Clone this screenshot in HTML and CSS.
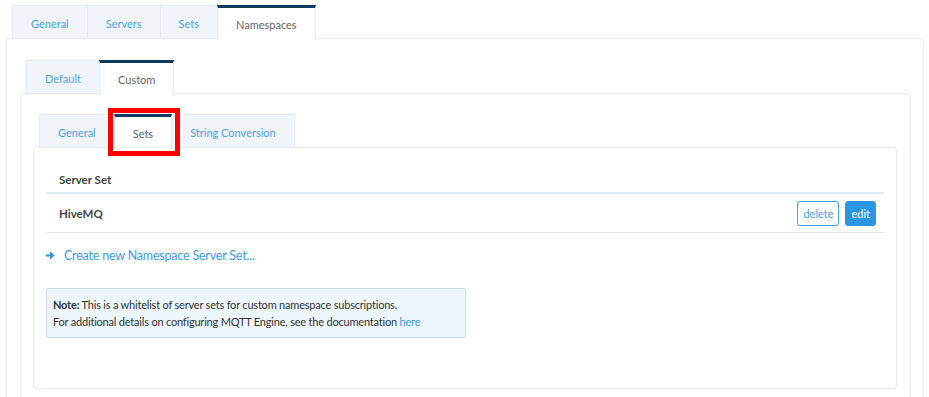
FILE: index.html
```html
<!DOCTYPE html>
<html lang="en">
<head>
    <meta charset="UTF-8">
    <meta name="viewport" content="width=device-width, initial-scale=1.0">
    <title>MQTT Engine - Namespaces</title>
    <link rel="stylesheet" href="styles.css">
</head>
<body>
    <div class="page">
        <div class="tabs top-tabs">
            <a class="tab">General</a>
            <a class="tab">Servers</a>
            <a class="tab">Sets</a>
            <a class="tab active">Namespaces</a>
        </div>
        <div class="panel outer">
            <div class="tabs">
                <a class="tab">Default</a>
                <a class="tab active">Custom</a>
            </div>
            <div class="panel middle">
                <div class="tabs">
                    <a class="tab">General</a>
                    <a class="tab active marked">Sets<span class="highlight"></span></a>
                    <a class="tab">String Conversion</a>
                </div>
                <div class="panel inner">
                    <table class="sets">
                        <thead>
                            <tr><th>Server Set</th><th></th></tr>
                        </thead>
                        <tbody>
                            <tr>
                                <td class="name">HiveMQ</td>
                                <td class="actions">
                                    <button class="btn btn-outline">delete</button>
                                    <button class="btn btn-primary">edit</button>
                                </td>
                            </tr>
                        </tbody>
                    </table>
                    <a class="create">
                        <svg width="9" height="9" viewBox="0 0 9 9"><path d="M0 4.5h6.5M4 1.5l3 3-3 3" fill="none" stroke="#2b93e0" stroke-width="1.8"/></svg>
                        Create new Namespace Server Set...
                    </a>
                    <div class="note">
                        <b>Note:</b> This is a whitelist of server sets for custom namespace subscriptions.<br>
                        For additional details on configuring MQTT Engine, see the documentation <a>here</a>
                    </div>
                </div>
            </div>
        </div>
    </div>
</body>
</html>
```

FILE: styles.css
```css
body {
    margin: 0;
    background: #fff;
    font-family: Lato, "Open Sans", sans-serif;
    color: #444;
}

a {
    color: #3a9ae2;
    cursor: pointer;
}

.page {
    padding: 5px 5px 0 6px;
}

.tabs {
    display: flex;
    margin-left: 6px;
}

.tab {
    position: relative;
    height: 33px;
    box-sizing: border-box;
    padding: 2px 18px 0;
    display: flex;
    align-items: center;
    font-size: 11px;
    color: #4aa1e4;
    background: #f1f5f9;
    border: 1px solid #e4eaf0;
    border-bottom: none;
    margin-right: -1px;
    margin-bottom: -1px;
}

.tab.active {
    background: #fff;
    color: #666;
    border-top: 3px solid #0d3a5e;
    height: 34px;
    z-index: 1;
}

.highlight {
    position: absolute;
    left: -7px;
    top: -9px;
    right: -9px;
    bottom: -8px;
    border: 5px solid #f00;
}

.panel {
    border: 1px solid #e5ebf1;
    border-radius: 4px;
    background: #fff;
}

.outer {
    padding: 21px 12px 0 13px;
    height: 340px;
    border-bottom: none;
}

.middle {
    padding: 20px 13px 0 12px;
    height: 300px;
}

.inner {
    height: 219px;
    padding: 21px 12px 0 12px;
}

.sets {
    width: 100%;
    border-collapse: collapse;
    font-size: 11.5px;
}

.sets th {
    text-align: left;
    font-weight: bold;
    color: #444;
    padding: 0 13px 3px;
    height: 20px;
    border-bottom: 2px solid #e4e9ee;
}

.sets td {
    height: 38px;
    padding: 0 13px;
    border-bottom: 1px solid #e6ebf0;
}

.sets .name {
    font-weight: bold;
    color: #444;
}

.sets .actions {
    text-align: right;
    padding-right: 8px;
}

.btn {
    font-family: inherit;
    font-size: 11px;
    height: 25px;
    padding: 0 5px;
    border-radius: 3px;
    cursor: pointer;
    vertical-align: middle;
}

.btn-outline {
    background: #fff;
    color: #4aa2e6;
    border: 1px solid #4aa2e6;
}

.btn-primary {
    background: #2a95e3;
    color: #fff;
    border: 1px solid #2a95e3;
    margin-left: 3px;
}

.create {
    display: flex;
    align-items: center;
    gap: 9px;
    font-size: 12.5px;
    letter-spacing: -0.2px;
    color: #3d9be4;
    margin-top: 13px;
    height: 18px;
}

.note {
    width: 406px;
    margin-top: 24px;
    padding: 7px 6px;
    background: #eef6fd;
    border: 1px solid #c7dbeb;
    border-radius: 3px;
    font-size: 11px;
    letter-spacing: -0.2px;
    line-height: 17px;
    color: #333;
}
```
